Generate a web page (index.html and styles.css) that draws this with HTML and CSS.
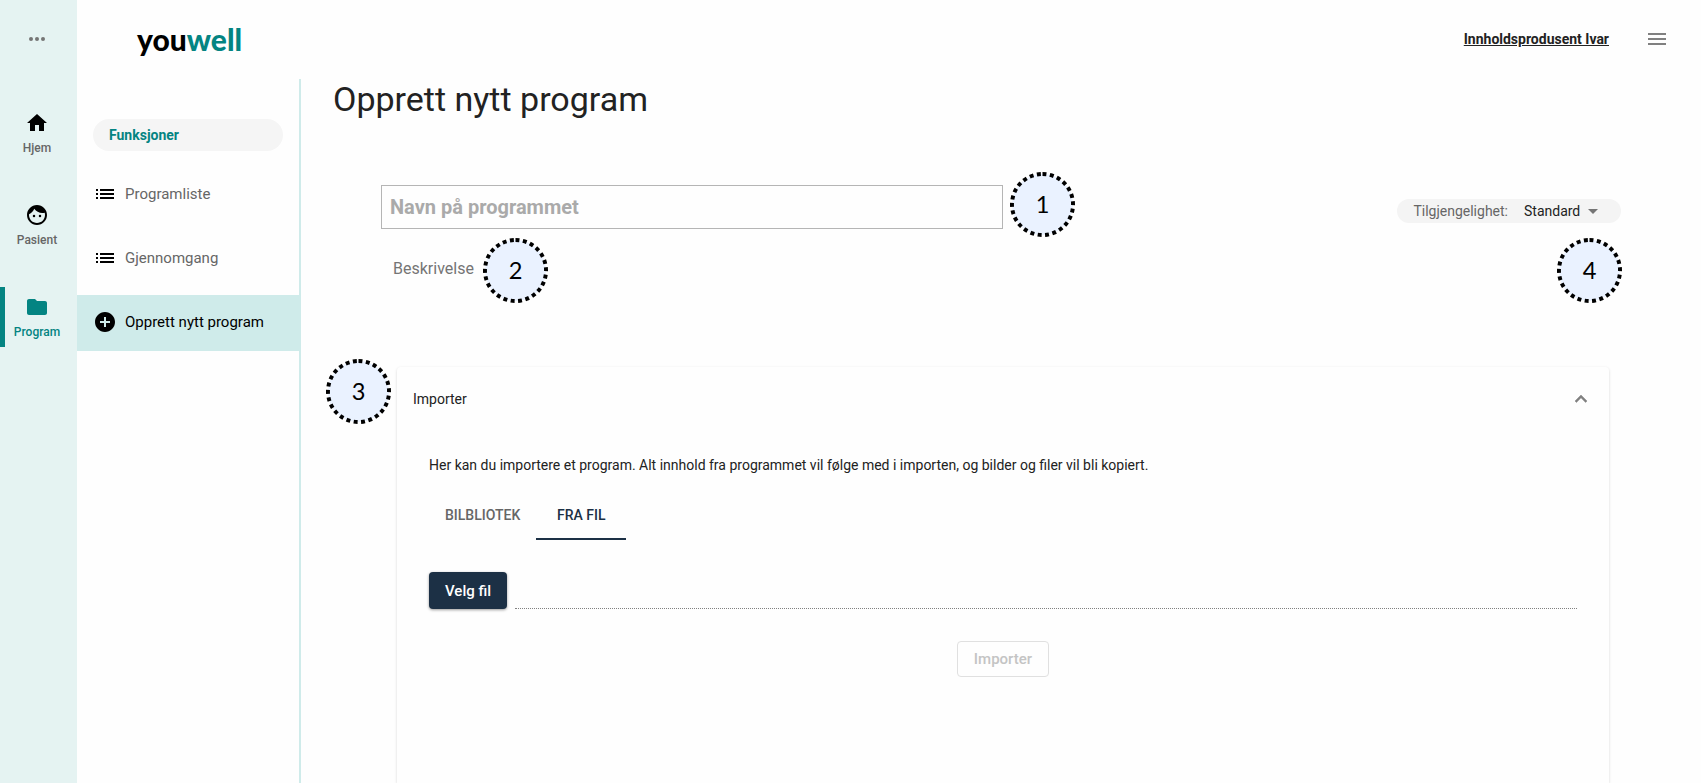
FILE: index.html
```html
<!DOCTYPE html>
<html lang="no">
<head>
    <meta charset="UTF-8">
    <meta name="viewport" content="width=device-width, initial-scale=1.0">
    <title>Opprett nytt program</title>
    <link rel="stylesheet" href="styles.css">
</head>
<body>

    <nav class="rail">
        <button type="button" class="rail-more" aria-label="Mer">
            <svg class="icon" viewBox="0 0 24 24"><circle cx="6" cy="12" r="2"/><circle cx="12" cy="12" r="2"/><circle cx="18" cy="12" r="2"/></svg>
        </button>
        <a class="rail-item" href="#">
            <svg class="icon" viewBox="0 0 24 24"><path d="M10 20v-6h4v6h5v-8h3L12 3 2 12h3v8z"/></svg>
            <span>Hjem</span>
        </a>
        <a class="rail-item" href="#">
            <svg class="icon" viewBox="0 0 24 24"><path d="M9 11.75a1.25 1.25 0 1 0 0 2.5 1.25 1.25 0 0 0 0-2.5zm6 0a1.25 1.25 0 1 0 0 2.5 1.25 1.25 0 0 0 0-2.5zM12 2C6.48 2 2 6.48 2 12s4.48 10 10 10 10-4.48 10-10S17.52 2 12 2zm0 18c-4.41 0-8-3.59-8-8 0-.29.02-.58.05-.86 2.36-1.05 4.23-2.98 5.21-5.37C11.07 8.33 14.05 10 17.42 10c.78 0 1.53-.09 2.25-.26.21.71.33 1.47.33 2.26 0 4.41-3.59 8-8 8z"/></svg>
            <span>Pasient</span>
        </a>
        <a class="rail-item active" href="#">
            <svg class="icon" viewBox="0 0 24 24"><path d="M10 4H4c-1.1 0-2 .9-2 2v12c0 1.1.9 2 2 2h16c1.1 0 2-.9 2-2V8c0-1.1-.9-2-2-2h-8z"/></svg>
            <span>Program</span>
        </a>
    </nav>

    <div class="page">
        <header class="topbar">
            <a class="logo" href="#">you<span class="logo-accent">well</span></a>
            <div class="topbar-right">
                <a class="user" href="#">Innholdsprodusent Ivar</a>
                <button type="button" class="menu-btn" aria-label="Meny">
                    <svg class="icon" viewBox="0 0 24 24"><path d="M3 18h18v-2H3zm0-5h18v-2H3zm0-7v2h18V6z"/></svg>
                </button>
            </div>
        </header>

        <div class="columns">
            <nav class="sidenav">
                <h2 class="sidenav-title">Funksjoner</h2>
                <a class="sidenav-item" href="#">
                    <svg class="icon" viewBox="0 0 24 24"><path d="M3 13h2v-2H3zm0 4h2v-2H3zm0-8h2V7H3zm4 4h14v-2H7zm0 4h14v-2H7zM7 7v2h14V7z"/></svg>
                    Programliste
                </a>
                <a class="sidenav-item" href="#">
                    <svg class="icon" viewBox="0 0 24 24"><path d="M3 13h2v-2H3zm0 4h2v-2H3zm0-8h2V7H3zm4 4h14v-2H7zm0 4h14v-2H7zM7 7v2h14V7z"/></svg>
                    Gjennomgang
                </a>
                <a class="sidenav-item active" href="#">
                    <svg class="icon" viewBox="0 0 24 24"><path d="M12 2C6.48 2 2 6.48 2 12s4.48 10 10 10 10-4.48 10-10S17.52 2 12 2zm5 11h-4v4h-2v-4H7v-2h4V7h2v4h4z"/></svg>
                    Opprett nytt program
                </a>
            </nav>

            <main class="main">
                <h1>Opprett nytt program</h1>

                <form class="program-form">
                    <div class="form-top">
                        <div class="name-field">
                            <input type="text" class="name-input" placeholder="Navn på programmet" aria-label="Navn på programmet">
                            <svg class="badge badge-1" viewBox="0 0 66 66"><circle cx="33" cy="33" r="31"/><text x="33" y="42">1</text></svg>
                        </div>
                        <div class="access">
                            <label for="access">Tilgjengelighet:</label>
                            <div class="select-wrap">
                                <select id="access">
                                    <option>Standard</option>
                                </select>
                                <svg class="icon caret" viewBox="0 0 24 24"><path d="M7 10l5 5 5-5z"/></svg>
                            </div>
                            <svg class="badge badge-4" viewBox="0 0 66 66"><circle cx="33" cy="33" r="31"/><text x="33" y="42">4</text></svg>
                        </div>
                    </div>

                    <div class="description">
                        <input type="text" class="description-input" placeholder="Beskrivelse" aria-label="Beskrivelse">
                        <svg class="badge badge-2" viewBox="0 0 66 66"><circle cx="33" cy="33" r="31"/><text x="33" y="42">2</text></svg>
                    </div>

                    <section class="panel">
                        <svg class="badge badge-3" viewBox="0 0 66 66"><circle cx="33" cy="33" r="31"/><text x="33" y="42">3</text></svg>
                        <button type="button" class="panel-header" aria-expanded="true">
                            Importer
                            <svg class="icon chevron" viewBox="0 0 24 24"><path d="M12 8l-6 6 1.41 1.41L12 10.83l4.59 4.58L18 14z"/></svg>
                        </button>
                        <div class="panel-body">
                            <p>Her kan du importere et program. Alt innhold fra programmet vil følge med i importen, og bilder og filer vil bli kopiert.</p>
                            <div class="tabs" role="tablist">
                                <button type="button" class="tab" role="tab" aria-selected="false">BILBLIOTEK</button>
                                <button type="button" class="tab active" role="tab" aria-selected="true">FRA FIL</button>
                            </div>
                            <div class="file-row">
                                <button type="button" class="file-btn">Velg fil</button>
                                <input type="text" class="file-name" aria-label="Valgt fil" readonly>
                            </div>
                            <button type="submit" class="import-btn" disabled>Importer</button>
                        </div>
                    </section>
                </form>
            </main>
        </div>
    </div>

</body>
</html>
```
FILE: styles.css
```css
* {
    box-sizing: border-box;
}
body {
    margin: 0;
    min-height: 100vh;
    display: flex;
    background-color: #fefefe;
    color: #222;
    font-family: Roboto, sans-serif;
    font-size: 14px;
    line-height: 24px;
}
a {
    color: inherit;
    text-decoration: none;
}
button,
input,
select {
    font: inherit;
    color: inherit;
    background: none;
    border: none;
    padding: 0;
}
button {
    cursor: pointer;
}
.icon {
    display: block;
    width: 24px;
    height: 24px;
    fill: currentColor;
    flex: none;
}

/* left rail */
.rail {
    flex: none;
    width: 77px;
    padding-top: 27px;
    background-color: #e5f3f2;
    color: #000;
}
.rail-more {
    display: block;
    margin: 0 25px 52px;
    color: #757575;
}
.rail-item {
    display: flex;
    flex-direction: column;
    align-items: center;
    height: 60px;
    margin-bottom: 32px;
    padding: 8px 8px 0 5px;
    font-size: 12px;
    font-weight: 500;
    line-height: 16px;
}
.rail-item span {
    margin-top: 5px;
    color: #666;
}
.rail-item.active {
    padding-left: 0;
    border-left: 5px solid #048482;
    color: #048482;
}
.rail-item.active span {
    color: #048482;
}

/* header */
.page {
    flex: 1;
    min-width: 0;
    display: flex;
    flex-direction: column;
}
.topbar {
    display: flex;
    justify-content: space-between;
    align-items: center;
    height: 79px;
    padding: 0 32px 2px 60px;
}
.logo {
    color: #000;
    font-family: Lato, sans-serif;
    font-size: 30px;
    font-weight: 900;
    line-height: 40px;
}
.logo-accent {
    color: #048482;
}
.topbar-right {
    display: flex;
    align-items: center;
    gap: 36px;
}
.user {
    font-weight: 700;
    text-decoration: underline;
}
.menu-btn {
    color: #808080;
}

/* side navigation */
.columns {
    flex: 1;
    display: flex;
}
.sidenav {
    flex: none;
    width: 224px;
    padding-top: 40px;
    border-right: 2px solid #cfebea;
}
.sidenav-title {
    margin: 0 16px 16px;
    padding: 4px 16px;
    border-radius: 16px;
    background-color: #f5f5f5;
    color: #048482;
    font-size: 14px;
    font-weight: 700;
}
.sidenav-item {
    display: flex;
    align-items: center;
    gap: 8px;
    height: 56px;
    margin-bottom: 8px;
    padding: 0 16px 2px;
    color: #666;
    font-size: 15px;
}
.sidenav-item .icon {
    color: #000;
}
.sidenav-item.active {
    background-color: #cfebea;
    color: #000;
}

/* content */
.main {
    flex: 1;
    min-width: 0;
    display: flex;
    flex-direction: column;
    padding: 0 76px 0 32px;
}
h1 {
    margin: 0;
    font-size: 34px;
    font-weight: 400;
    line-height: 40px;
}
.program-form {
    flex: 1;
    display: flex;
    flex-direction: column;
    margin: 66px 0 0 48px;
}
.form-top {
    display: flex;
    justify-content: space-between;
    align-items: center;
}
.name-field {
    position: relative;
    width: 50%;
}
.name-input {
    display: block;
    width: 100%;
    height: 44px;
    padding: 0 8px;
    border: 1px solid #b5b5b5;
    font-size: 20px;
    font-weight: 700;
}
.name-input::placeholder {
    color: #aaa;
    opacity: 1;
}
.access {
    position: relative;
    display: flex;
    align-items: center;
    gap: 16px;
    margin: 8px 4px 0 0;
    padding: 0 16px;
    border-radius: 12px;
    background-color: #f4f4f4;
}
.access label {
    color: #666;
}
.select-wrap {
    position: relative;
}
.access select {
    display: block;
    width: 81px;
    height: 24px;
    appearance: none;
}
.caret {
    position: absolute;
    top: 0;
    right: 0;
    color: #757575;
    pointer-events: none;
}
.description {
    position: relative;
    margin: 24px 0 84px 12px;
}
.description-input {
    display: block;
    width: 50%;
    height: 30px;
    font-size: 16px;
}
.description-input::placeholder {
    color: #757575;
    opacity: 1;
}

/* numbered markers */
.badge {
    position: absolute;
    width: 65px;
    height: 65px;
}
.badge circle {
    fill: #eaf2ff;
    stroke: #000;
    stroke-width: 4;
    stroke-dasharray: 4 3.55;
    transform: rotate(-90deg);
    transform-origin: center;
}
.badge text {
    fill: #000;
    font-family: Lato, sans-serif;
    font-size: 24px;
    text-anchor: middle;
}
.badge-1 {
    top: -13px;
    left: calc(100% + 7px);
}
.badge-2 {
    top: -15px;
    left: 90px;
}
.badge-3 {
    top: -8px;
    left: -71px;
}
.badge-4 {
    top: 39px;
    right: -1px;
}

/* import panel */
.panel {
    position: relative;
    flex: 1;
    margin: 0 16px;
    border-radius: 4px 4px 0 0;
    box-shadow: 0 1px 3px rgba(0, 0, 0, 0.16);
}
.panel-header {
    display: flex;
    justify-content: space-between;
    align-items: center;
    width: 100%;
    height: 64px;
    padding: 0 16px;
}
.chevron {
    color: #808080;
    stroke: currentColor;
    stroke-width: 0.5;
}
.panel-body {
    display: flex;
    flex-direction: column;
    padding: 22px 32px;
}
.panel-body p {
    margin: 0;
}
.tabs {
    display: flex;
    margin-top: 15px;
}
.tab {
    min-width: 90px;
    height: 48px;
    padding: 0 16px;
    border-bottom: 2px solid transparent;
    color: #666;
    font-size: 14px;
    font-weight: 500;
}
.tab.active {
    border-color: #1c3045;
    color: #1c3045;
}
.file-row {
    display: flex;
    gap: 8px;
    margin-top: 32px;
}
.file-btn {
    height: 37px;
    padding: 0 16px;
    border-radius: 4px;
    background-color: #1c3045;
    box-shadow: 0 1px 3px rgba(0, 0, 0, 0.4);
    color: #fff;
    font-size: 15px;
    font-weight: 500;
}
.file-name {
    flex: 1;
    border-bottom: 1px dotted #808080;
}
.import-btn {
    align-self: center;
    height: 36px;
    margin-top: 32px;
    padding: 0 16px;
    border: 1px solid #e0e0e0;
    border-radius: 4px;
    color: #c4c4c4;
    font-size: 15px;
    font-weight: 500;
    cursor: default;
}
```
